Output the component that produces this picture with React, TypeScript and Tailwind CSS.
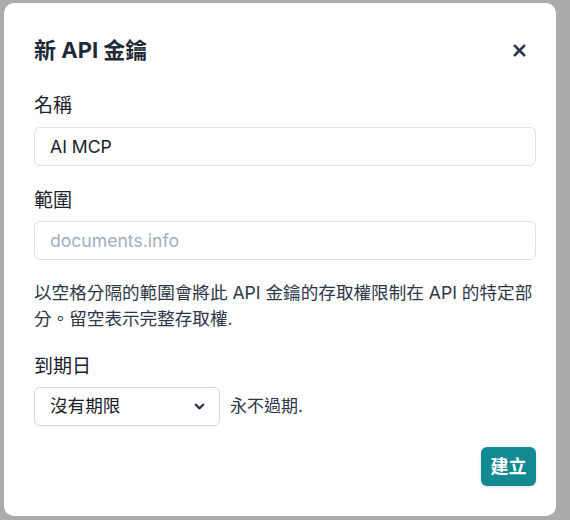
import { ChevronDown, X } from "lucide-react";

export default function App() {
    return (
        <div
            className="relative h-[520px] w-[570px] overflow-hidden bg-[#ababab]"
            style={{ fontFamily: 'Inter, "Noto Sans CJK TC", sans-serif' }}
        >
            <div className="ml-[4px] mt-[3px] h-[513px] w-[552px] rounded-[10px] bg-white pl-[30px] pr-[20px] pt-[33px]">
                <div className="flex h-[28px] items-center justify-between">
                    <h2 className="text-[22px] font-bold leading-[28px] text-[#1f2937]">新 API 金鑰</h2>
                    <button className="mr-[7px] text-[#2d3748]">
                        <X size={19} strokeWidth={3.2} />
                    </button>
                </div>

                <form className="mt-[28px]">
                    <label className="mb-[7px] block text-[19px] font-normal leading-[28px] text-[#1a202c]">
                        名稱
                    </label>
                    <input
                        defaultValue="AI MCP"
                        className="block h-[39px] w-full rounded-[6px] border border-[#dde1e7] px-[15px] text-[17.6px] text-[#1a202c] outline-none"
                    />

                    <label className="mb-[6px] mt-[21px] block text-[19px] font-normal leading-[28px] text-[#1a202c]">
                        範圍
                    </label>
                    <input
                        placeholder="documents.info"
                        className="block h-[39px] w-full rounded-[6px] border border-[#dde1e7] px-[15px] text-[17.6px] text-[#1a202c] outline-none placeholder:text-[#a0aec0]"
                    />

                    <p className="mt-[20px] text-[17.6px] leading-[26.4px] text-[#2d3748]">
                        以空格分隔的範圍會將此 API 金鑰的存取權限制在 API 的特定部分。留空表示完整存取權.
                    </p>

                    <label className="mb-[6px] mt-[20px] block text-[19px] font-normal leading-[28px] text-[#1a202c]">
                        到期日
                    </label>
                    <div className="flex items-center gap-[10px]">
                        <div className="flex h-[39px] w-[186px] items-center justify-between rounded-[6px] border border-[#cfd8e3] pl-[15px] pr-[12px] text-[17.6px] text-[#1a202c] shadow-[0_1px_2px_rgba(0,0,0,0.05)]">
                            <span>沒有期限</span>
                            <ChevronDown size={15} strokeWidth={3.4} className="text-[#2d3748]" />
                        </div>
                        <span className="text-[17px] text-[#2d3748]">永不過期.</span>
                    </div>

                    <div className="mt-[21px] flex justify-end">
                        <button
                            type="button"
                            className="h-[39px] w-[55px] rounded-[6px] bg-[#128a92] text-[18px] font-bold text-white shadow-[0_1px_3px_rgba(0,0,0,0.15)]"
                        >
                            建立
                        </button>
                    </div>
                </form>
            </div>
        </div>
    );
}
